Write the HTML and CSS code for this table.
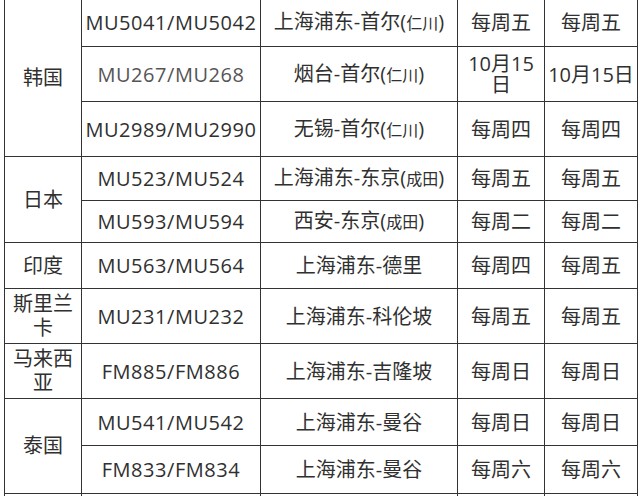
FILE: index.html
```html
<!DOCTYPE html>
<html lang="zh-CN">
<head>
<meta charset="utf-8">
<title>航班表</title>
<link rel="stylesheet" href="styles.css">
</head>
<body>
<table class="flights">
  <colgroup>
    <col class="c-country">
    <col class="c-code">
    <col class="c-route">
    <col class="c-day">
    <col class="c-day2">
  </colgroup>
  <tbody>
    <tr class="h48">
      <td class="country" rowspan="3">韩国</td>
      <td class="code">MU5041/MU5042</td>
      <td>上海浦东-首尔(<span class="sm">仁川</span>)</td>
      <td>每周五</td>
      <td>每周五</td>
    </tr>
    <tr class="h55">
      <td class="code light">MU267/MU268</td>
      <td>烟台-首尔(<span class="sm">仁川</span>)</td>
      <td class="wrap">10月15日</td>
      <td>10月15日</td>
    </tr>
    <tr class="h55">
      <td class="code">MU2989/MU2990</td>
      <td>无锡-首尔(<span class="sm">仁川</span>)</td>
      <td>每周四</td>
      <td>每周四</td>
    </tr>
    <tr class="h44">
      <td class="country" rowspan="2">日本</td>
      <td class="code">MU523/MU524</td>
      <td>上海浦东-东京(<span class="sm">成田</span>)</td>
      <td>每周五</td>
      <td>每周五</td>
    </tr>
    <tr class="h42">
      <td class="code">MU593/MU594</td>
      <td>西安-东京(<span class="sm">成田</span>)</td>
      <td>每周二</td>
      <td>每周二</td>
    </tr>
    <tr class="h46">
      <td class="country">印度</td>
      <td class="code">MU563/MU564</td>
      <td>上海浦东-德里</td>
      <td>每周四</td>
      <td>每周五</td>
    </tr>
    <tr class="h55">
      <td class="country">斯里兰卡</td>
      <td class="code">MU231/MU232</td>
      <td>上海浦东-科伦坡</td>
      <td>每周五</td>
      <td>每周五</td>
    </tr>
    <tr class="h55">
      <td class="country">马来西亚</td>
      <td class="code">FM885/FM886</td>
      <td>上海浦东-吉隆坡</td>
      <td>每周日</td>
      <td>每周日</td>
    </tr>
    <tr class="h47">
      <td class="country" rowspan="2">泰国</td>
      <td class="code">MU541/MU542</td>
      <td>上海浦东-曼谷</td>
      <td>每周日</td>
      <td>每周日</td>
    </tr>
    <tr class="h48">
      <td class="code">FM833/FM834</td>
      <td>上海浦东-曼谷</td>
      <td>每周六</td>
      <td>每周六</td>
    </tr>
    <tr class="tail">
      <td class="country"></td>
      <td class="code"></td>
      <td></td>
      <td></td>
      <td></td>
    </tr>
  </tbody>
</table>
</body>
</html>
```

FILE: styles.css
```css
html, body {
  margin: 0;
  padding: 0;
  background: #ffffff;
}

body {
  height: 496px;
  overflow: hidden;
}

.flights {
  margin: -2px 0 0 4px;
  border-collapse: collapse;
  table-layout: fixed;
  width: 633px;
  font-family: "Open Sans", "Noto Sans CJK SC", sans-serif;
  font-size: 20px;
  color: #303030;
}

.c-country { width: 77px; }
.c-code { width: 179px; }
.c-route { width: 197px; }
.c-day { width: 87px; }
.c-day2 { width: 93px; }

.flights td {
  border: 1px solid #333333;
  padding: 0 2px;
  text-align: center;
  vertical-align: middle;
  line-height: 23px;
  white-space: nowrap;
}

.flights td.country {
  white-space: normal;
  line-height: 24px;
}

.flights td.code {
  letter-spacing: 0.55px;
}

.flights td.wrap {
  white-space: normal;
  line-height: 21px;
  padding: 0 8px;
}

.light {
  color: #555555;
}

.sm {
  font-size: 16px;
}

.h42 { height: 42px; }
.h44 { height: 44px; }
.h46 { height: 46px; }
.h47 { height: 47px; }
.h48 { height: 48px; }
.h55 { height: 55px; }

.flights tr.tail td {
  height: 3px;
  padding: 0;
  line-height: 0;
  font-size: 0;
  border-bottom: none;
}
```
